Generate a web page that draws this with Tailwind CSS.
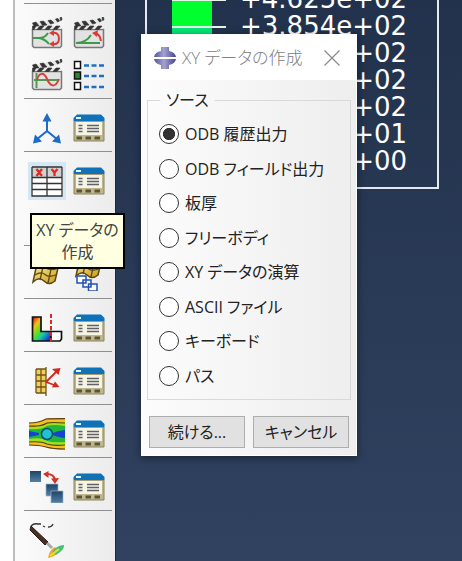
<!DOCTYPE html>
<html lang="ja">
<head>
    <meta charset="UTF-8">
    <meta name="viewport" content="width=device-width, initial-scale=1.0">
    <title>XY データの作成</title>
    <script src="https://cdn.jsdelivr.net/npm/@tailwindcss/browser@4"></script>
</head>
<body class="relative flex h-screen overflow-hidden bg-white font-['Open_Sans','Noto_Sans_CJK_JP',sans-serif] [font-feature-settings:'palt'] text-[#222]">

    <!-- shared icon shapes -->
    <svg class="absolute size-0">
        <defs>
            <linearGradient id="rainbow" x1="0" y1="0" x2="1" y2="1">
                <stop offset="0.05" stop-color="#e8200c"/>
                <stop offset="0.25" stop-color="#f5c018"/>
                <stop offset="0.45" stop-color="#5fe01c"/>
                <stop offset="0.65" stop-color="#16c8a8"/>
                <stop offset="0.9" stop-color="#1638e0"/>
            </linearGradient>
            <linearGradient id="steel" x1="0" y1="0" x2="0" y2="1">
                <stop offset="0" stop-color="#1d4468"/>
                <stop offset="1" stop-color="#5480a6"/>
            </linearGradient>
            <linearGradient id="gold" x1="0" y1="0" x2="1" y2="1">
                <stop offset="0" stop-color="#fbe88a"/>
                <stop offset="1" stop-color="#c99a1c"/>
            </linearGradient>
            <linearGradient id="violet" x1="0" y1="0" x2="1" y2="0">
                <stop offset="0" stop-color="#55539a"/>
                <stop offset="0.45" stop-color="#a3a2d2"/>
                <stop offset="1" stop-color="#45438a"/>
            </linearGradient>
        </defs>
        <symbol id="clapper" viewBox="0 0 32 32">
            <path d="M1.500 12.500H30.500V29L29 30.500H3L1.500 29Z" fill="#e2e2e2" stroke="#777" stroke-width="1.500"/>
            <path d="M2 6L30 1V5L17 9L30 9V12H1.500Z" fill="#e6e6e6"/>
            <path d="M1.500 6L5 5L8 9H3ZM9 4.500L12.500 4L16 8L11.500 8.500ZM17 3.500L20 3L23 6L19.500 7ZM24.500 2L27 1.500L28.500 4L26.500 5ZM29 .500L30.500 0L31 3L29.500 3.500ZM1.500 9H5L3 12.500H1.500ZM9 9H13L10 12.500H6ZM17 9H21L18 12.500H14ZM25 9H29L26 12.500H22Z" fill="#333" stroke="#333" stroke-width=".600"/>
        </symbol>
        <symbol id="manager" viewBox="0 0 32 28">
            <path d="M1 7H31V27H1Z" fill="#bdb68e" stroke="#8b8460"/>
            <path d="M.500 7V4L4 .500H28L31.500 4V7Z" fill="#0f71b8"/>
            <path d="M3 3H8V5H3Z" fill="#e8f4ff"/>
            <path d="M3 8H29V21H3Z" fill="#f6f4e4"/>
            <path d="M5.500 11.500H9.500M5.500 14.500H9.500M5.500 17.500H9.500M14 11.500H26M14 14.500H26M14 17.500H26" stroke="#5f6068" stroke-width="1.300"/>
            <path d="M3.500 22.500H9V25.500H3.500ZM12.500 22.500H18V25.500H12.500ZM21.500 22.500H27V25.500H21.500Z" fill="#5d5531"/>
        </symbol>
        <symbol id="flag" viewBox="0 0 28 20">
            <path d="M4 3Q10 0 14 3T26 3L23 16Q17 21 12 16T1 17Z" fill="url(#gold)" stroke="#5a4712" stroke-width="1.500"/>
            <path d="M3 10Q9 6 13 9.500T25 9.500M11 2L8 15M19 4L16 18" fill="none" stroke="#5a4712" stroke-width="1.300"/>
        </symbol>
    </svg>

    <!-- toolbox -->
    <div class="w-[13px] shrink-0 bg-white"></div>
    <aside class="w-[102px] shrink-0 border-l-2 border-[#bdbdbd] bg-linear-to-r from-[#fbfbfb] to-[#ececec] pt-[3px] pl-[9px] pr-[3px]">
        <div class="grid grid-cols-2 gap-x-2.5 gap-y-2.5 border-t border-[#8f8f8f] px-[7px] pt-[13px] pb-[7px]">
            <button class="size-8" aria-label="変形のアニメーション">
                <svg class="size-8" viewBox="0 0 32 32">
                    <use href="#clapper"/>
                    <path d="M2 21H8Q14 21 17 16M8 21Q14 22 18 27" fill="none" stroke="#3c9a4a" stroke-width="2"/>
                    <path d="M21 16Q28 15 28 21.500T21 27" fill="none" stroke="#dc3b35" stroke-width="2"/>
                    <path d="M18 16L23 13V19ZM18 27L23 24V30Z" fill="#dc3b35"/>
                </svg>
            </button>
            <button class="size-8" aria-label="スケールのアニメーション">
                <svg class="size-8" viewBox="0 0 32 32">
                    <use href="#clapper"/>
                    <path d="M3 26H27M3 26Q13 26 18 18" fill="none" stroke="#3c9a4a" stroke-width="2"/>
                    <path d="M22 16Q27 17 28 24" fill="none" stroke="#dc3b35" stroke-width="2"/>
                    <path d="M19 16L25 13L24 20Z" fill="#dc3b35"/>
                </svg>
            </button>
            <button class="size-8" aria-label="調和のアニメーション">
                <svg class="size-8" viewBox="0 0 32 32">
                    <use href="#clapper"/>
                    <path d="M5.500 14V29M3 21H28" stroke="#4f9a55" stroke-width="2"/>
                    <path d="M6 21C8 13 13 13 16 20S24 30 28 20" fill="none" stroke="#d8403c" stroke-width="2"/>
                </svg>
            </button>
            <button class="size-8" aria-label="アニメーションオプション">
                <svg class="size-8" viewBox="0 0 32 32">
                    <path d="M1.500 2.500H7.500V9.500H1.500Z" fill="#fff" stroke="#111" stroke-width="1.500"/>
                    <path d="M1.500 13H7.500V20H1.500Z" fill="#2a8a32" stroke="#111" stroke-width="1.500"/>
                    <path d="M1.500 23.500H7.500V30.500H1.500Z" fill="#fff" stroke="#111" stroke-width="1.500"/>
                    <path d="M11 6.500H31M11 17H31M11 28H31" stroke="#1e6fc4" stroke-width="2.500" stroke-dasharray="5 2.500"/>
                </svg>
            </button>
        </div>
        <div class="grid grid-cols-2 gap-x-2.5 border-t border-[#8f8f8f] px-[7px] pt-[13px] pb-[7px]">
            <button class="size-8" aria-label="座標系の作成">
                <svg class="size-8" viewBox="0 0 32 32">
                    <path d="M16 6V19L5 28M16 19L27 28" fill="none" stroke="#1b6bc8" stroke-width="2"/>
                    <path d="M16 1L20.500 9.500H11.500ZM2 31.500L4 22.500L11 29.500ZM30 31.500L21 29.500L28 22.500Z" fill="#1b6bc8"/>
                </svg>
            </button>
            <button class="size-8" aria-label="座標系マネージャ"><svg class="h-7 w-8" viewBox="0 0 32 28"><use href="#manager"/></svg></button>
        </div>
        <!-- second row of this group stays empty under the tooltip -->
        <div class="grid grid-cols-2 gap-x-2.5 border-t border-[#8f8f8f] px-[7px] pt-[13px] pb-12">
            <button class="size-8 bg-[#d3e7f5] outline-3 outline-[#d3e7f5]" aria-label="XY データの作成">
                <svg class="size-8" viewBox="0 0 32 32">
                    <path d="M.500 2H31.500V31H.500Z" fill="#fff"/>
                    <path d="M1 2H31V12H1Z" fill="#d0d0d0"/>
                    <path d="M1 2V31H31V2M1 2H31M16 2V31M1 12.500H31M1 18.500H31M1 24.500H31" fill="none" stroke="#333" stroke-width="1.300"/>
                    <path d="M5.500 4L11 11M11 4L5.500 11M20.500 4L23.500 7.500L26.500 4M23.500 7V11" fill="none" stroke="#e02a22" stroke-width="2.300"/>
                </svg>
            </button>
            <button class="size-8" aria-label="XY データマネージャ"><svg class="h-7 w-8" viewBox="0 0 32 28"><use href="#manager"/></svg></button>
        </div>
        <div class="grid grid-cols-2 gap-x-2.5 border-t border-[#8f8f8f] px-[7px] pt-[13px] pb-[7px]">
            <button class="size-8" aria-label="フリーボディの作成">
                <svg class="size-8" viewBox="0 0 32 32"><use href="#flag" x="1" y="6" width="28" height="20"/></svg>
            </button>
            <button class="size-8" aria-label="フリーボディオプション">
                <svg class="size-8" viewBox="0 0 32 32">
                    <use href="#flag" x="2" y="0" width="28" height="20"/>
                    <path d="M4 17H13V24H4ZM10 21H18V28H10ZM15.500 25H24V32H15.500Z" fill="#fff" stroke="#2450b4" stroke-width="1.500"/>
                </svg>
            </button>
        </div>
        <div class="grid grid-cols-2 gap-x-2.5 border-t border-[#8f8f8f] px-[7px] pt-[13px] pb-[7px]">
            <button class="size-8" aria-label="ビューカット">
                <svg class="size-8" viewBox="0 0 32 32">
                    <path d="M1.500 5H10V19.500H20V29H1.500Z" fill="url(#rainbow)" stroke="#111" stroke-width="1.700"/>
                    <path d="M20 19.500H30.500V27L29 29H20Z" fill="#fff" stroke="#111" stroke-width="1.700"/>
                    <path d="M20 2V32" stroke="#dc2626" stroke-width="2" stroke-dasharray="4 2"/>
                </svg>
            </button>
            <button class="size-8" aria-label="ビューカットマネージャ"><svg class="h-7 w-8" viewBox="0 0 32 28"><use href="#manager"/></svg></button>
        </div>
        <div class="grid grid-cols-2 gap-x-2.5 border-t border-[#8f8f8f] px-[7px] pt-[13px] pb-[7px]">
            <button class="size-8" aria-label="フリーボディカット">
                <svg class="size-8" viewBox="0 0 32 32">
                    <path d="M5 4H15V28H5Z" fill="#f2cf5a"/>
                    <path d="M5 4V28M10 4V28M15 2V31M5 4H15M5 10H15M5 16H15M5 22H15M5 28H15" fill="none" stroke="#6e5418" stroke-width="1.300"/>
                    <path d="M15 17L26 6M15 17L26 21" stroke="#d02a20" stroke-width="1.800"/>
                    <path d="M29.500 3L27.500 10L21 4ZM28.500 22L21 22.500L24 16.500Z" fill="#d02a20"/>
                </svg>
            </button>
            <button class="size-8" aria-label="フリーボディカットマネージャ"><svg class="h-7 w-8" viewBox="0 0 32 28"><use href="#manager"/></svg></button>
        </div>
        <div class="grid grid-cols-2 gap-x-2.5 border-t border-[#8f8f8f] px-[7px] pt-[13px] pb-[7px]">
            <button class="size-8" aria-label="ストリーム">
                <svg class="-ml-0.5 h-8 w-9" viewBox="0 0 36 32">
                    <path d="M0 5Q10 5 17 1Q19 0 36 0V32Q24 32 17 29Q10 27 0 27Z" fill="#f2c224"/>
                    <path d="M0 8Q12 9 18 5Q22 3 36 4V28Q24 28 17 26Q10 23 0 24Z" fill="#a5e01e"/>
                    <path d="M0 11Q12 12 18 8Q24 6 36 8V24Q24 25 18 23Q12 19 0 21Z" fill="#1fb83a"/>
                    <path d="M0 13L10 15V17L0 19ZM22 16Q27 13 36 12V20Q27 19 22 16Z" fill="#1742d8"/>
                    <path d="M0 5Q10 5 17 1Q19 .700 36 .700M0 8Q12 9 18 5Q22 4 36 5M0 27Q10 27 17 29Q24 31 36 31M0 24Q12 23 18 26Q24 28 36 27" fill="none" stroke="#5a3c10" stroke-width="1.200"/>
                    <circle cx="18" cy="16" r="5.500" fill="#1fc2d6" stroke="#154a68" stroke-width="1.500"/>
                </svg>
            </button>
            <button class="size-8" aria-label="ストリームマネージャ"><svg class="h-7 w-8" viewBox="0 0 32 28"><use href="#manager"/></svg></button>
        </div>
        <div class="grid grid-cols-2 gap-x-2.5 border-t border-[#8f8f8f] px-[7px] pt-[13px] pb-[7px]">
            <button class="size-8" aria-label="オーバーレイ">
                <svg class="-ml-0.5 h-8 w-9" viewBox="0 0 36 32">
                    <path d="M1 0H12V11H1Z" fill="url(#steel)"/>
                    <path d="M17 13H29V25H17Z" fill="url(#steel)" stroke="#9db4c8" stroke-width=".700"/>
                    <path d="M22 20H34V32H22Z" fill="url(#steel)" stroke="#9db4c8" stroke-width=".700"/>
                    <path d="M18 3Q25 3 26 9" fill="none" stroke="#d3322a" stroke-width="2"/>
                    <path d="M14 3L19.500 0V7ZM26 13L22 7.500L30 7Z" fill="#d3322a"/>
                </svg>
            </button>
            <button class="size-8" aria-label="オーバーレイマネージャ"><svg class="h-7 w-8" viewBox="0 0 32 28"><use href="#manager"/></svg></button>
        </div>
        <div class="grid grid-cols-2 gap-x-2.5 border-t border-[#8f8f8f] px-[7px] pt-3">
            <button class="size-9" aria-label="カラーコード">
                <svg class="-ml-0.5 size-9" viewBox="0 0 36 36">
                    <path d="M2 3Q5 0 9 1H12M14 3L16 4M19 4Q23 4 24 1" fill="none" stroke="#333" stroke-width="1.300"/>
                    <path d="M2 3L19 19L16 22L1 7Z" fill="#4a2f26" stroke="#2b1a14"/>
                    <path d="M18 20L23 25" stroke="#a8a8a8" stroke-width="3"/>
                    <path d="M19 35Q20 27 26 24L30 28Q26 34 19 35Z" fill="#efaa2a"/>
                    <path d="M23 29Q28 22 35 22Q36 26 27 32Z" fill="#43c07a"/>
                    <path d="M21 33L30 26" stroke="#f0d83a" stroke-width="2"/>
                </svg>
            </button>
        </div>
    </aside>

    <!-- viewport with contour legend -->
    <main class="relative flex-1 overflow-hidden border-l border-[#1a2940] bg-linear-to-b from-[#22324c] to-[#304260]">
        <div class="absolute -top-4 left-[29px] flex h-[205px] w-[294px] border-2 border-[#e6eaf0]">
            <div class="ml-[25px] w-[54px]">
                <div class="h-[13px] w-10 bg-[#00ff20]"></div>
                <div class="border-t-2 border-[#e6f5ea]"><div class="h-[25px] w-10 bg-[#00ff2e]"></div></div>
                <div class="border-t-2 border-[#e6f5ea]"><div class="h-[25px] w-10 bg-[#00e676]"></div></div>
                <div class="border-t-2 border-[#e6f5ea]"><div class="h-[25px] w-10 bg-[#00e8b9]"></div></div>
            </div>
            <div class="ml-3.5 font-['DejaVu_Sans',sans-serif] text-[26px] leading-[27px] text-white">
                <div>+4.625e+02</div>
                <div>+3.854e+02</div>
                <div>+3.083e+02</div>
                <div>+2.312e+02</div>
                <div>+1.542e+02</div>
                <div>+7.708e+01</div>
                <div>+0.000e+00</div>
            </div>
        </div>
    </main>

    <!-- tooltip -->
    <div role="tooltip" class="absolute top-[213px] left-[30px] w-[95px] border-2 border-black bg-[#ffffe1] py-1 text-center text-[16px] leading-[22px] text-[#444]">XY データの<br>作成</div>

    <!-- dialog -->
    <form role="dialog" aria-labelledby="dialog-title" class="absolute top-[34px] left-[141px] w-[216px] border border-white bg-linear-to-r from-[#fcfcfc] to-[#eeeeee] shadow-[0_2px_8px_rgba(0,0,0,0.45)]">
        <div class="flex h-[45px] items-center bg-white pl-3 pr-4">
            <svg class="h-6 w-[22px]" viewBox="0 0 22 24">
                <path d="M7 1H15V5Q21 6 22 11H0Q1 6 7 5ZM0 13H22Q21 18 15 19V23H7V19Q1 18 0 13Z" fill="url(#violet)"/>
            </svg>
            <h1 id="dialog-title" class="ml-1.5 text-[17px] font-light whitespace-nowrap text-[#808080]">XY データの作成</h1>
            <button type="button" class="ml-auto" aria-label="閉じる">
                <svg class="size-4" viewBox="0 0 16 16"><path d="M.500 .500L15.500 15.500M15.500 .500L.500 15.500" stroke="#8a8a8a" stroke-width="1.200"/></svg>
            </button>
        </div>
        <div class="px-[5px] pt-2 pb-[7px]">
            <fieldset class="h-[312px] border border-[#d9d9d9] px-[11px]">
                <legend class="ml-px px-1.5 text-[16px] leading-6">ソース</legend>
                <div class="flex h-[276px] flex-col justify-between pt-2.5 text-[16px] leading-6 whitespace-nowrap">
                    <label class="flex items-center gap-1.5"><input type="radio" name="source" checked class="size-5 appearance-none rounded-full border border-[#333] bg-white checked:bg-radial checked:from-[#333] checked:from-45% checked:to-white checked:to-50%">ODB 履歴出力</label>
                    <label class="flex items-center gap-1.5"><input type="radio" name="source" class="size-5 appearance-none rounded-full border border-[#333] bg-white">ODB フィールド出力</label>
                    <label class="flex items-center gap-1.5"><input type="radio" name="source" class="size-5 appearance-none rounded-full border border-[#333] bg-white">板厚</label>
                    <label class="flex items-center gap-1.5"><input type="radio" name="source" class="size-5 appearance-none rounded-full border border-[#333] bg-white">フリーボディ</label>
                    <label class="flex items-center gap-1.5"><input type="radio" name="source" class="size-5 appearance-none rounded-full border border-[#333] bg-white">XY データの演算</label>
                    <label class="flex items-center gap-1.5"><input type="radio" name="source" class="size-5 appearance-none rounded-full border border-[#333] bg-white">ASCII ファイル</label>
                    <label class="flex items-center gap-1.5"><input type="radio" name="source" class="size-5 appearance-none rounded-full border border-[#333] bg-white">キーボード</label>
                    <label class="flex items-center gap-1.5"><input type="radio" name="source" class="size-5 appearance-none rounded-full border border-[#333] bg-white">パス</label>
                </div>
            </fieldset>
            <div class="mt-4 grid grid-cols-2 gap-2 px-0.5">
                <button type="button" class="h-8 border border-[#adadad] bg-[#e1e1e1] text-[16px] leading-6">続ける...</button>
                <button type="button" class="h-8 border border-[#adadad] bg-[#e1e1e1] text-[16px] leading-6">キャンセル</button>
            </div>
        </div>
    </form>
</body>
</html>
